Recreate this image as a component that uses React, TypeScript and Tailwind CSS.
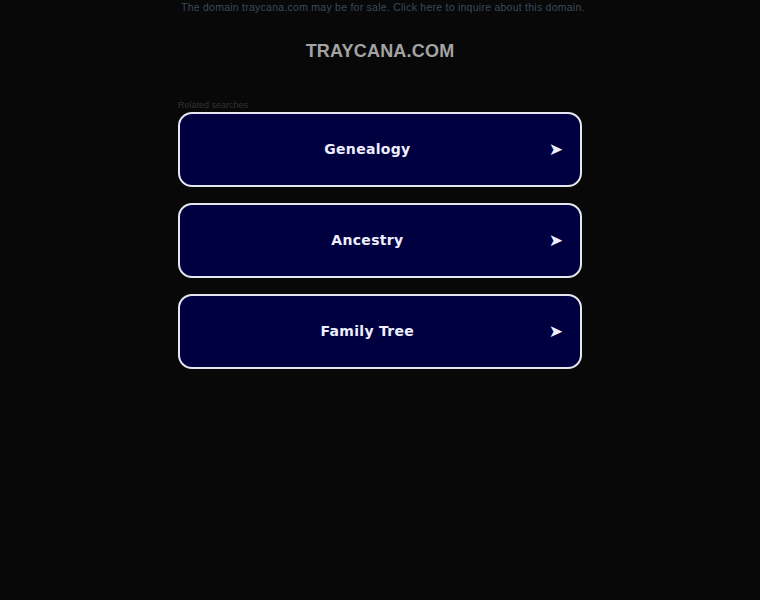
import React from 'react';

const searches = ['Genealogy', 'Ancestry', 'Family Tree'];

export default function App() {
  return (
    <div className="min-h-[600px] bg-[#080808] font-['Liberation_Sans',Arial,sans-serif]">
      <div className="mx-auto w-[404px] text-center">
        <p className="pt-[1px] pl-[3px] text-[10.5px] leading-[12px] tracking-[0.25px] text-[#3b4a5c] whitespace-nowrap">
          The domain traycana.com may be for sale. Click here to inquire about this domain.
        </p>
        <h1 className="mt-[28px] text-[18px] leading-[20px] font-bold tracking-[0.2px] text-[#a3a3a3]">
          TRAYCANA.COM
        </h1>
        <p className="mt-[39px] text-left text-[9px] leading-[10px] text-[#333333]">Related searches</p>
        <div className="mt-[2px] flex flex-col gap-[16px]">
          {searches.map(s => (
            <a
              key={s}
              href="#"
              className="flex h-[75px] items-center rounded-[14px] border-2 border-[#e6e6f0] bg-[#000040] text-[#eeeeff] font-['DejaVu_Sans',sans-serif]"
            >
              <span className="flex-1 pl-[6px] text-center text-[14px] font-bold tracking-[0.3px]">{s}</span>
              <span className="mr-[17px] text-[17px] leading-none">➤</span>
            </a>
          ))}
        </div>
      </div>
    </div>
  );
}
